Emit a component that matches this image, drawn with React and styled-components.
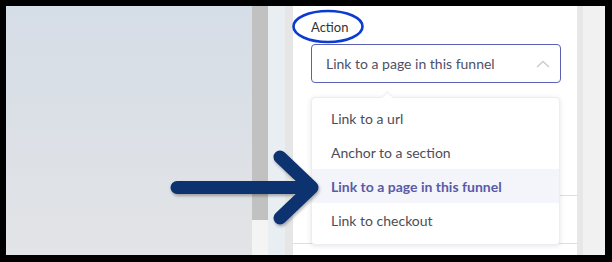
import React from 'react';
import styled, { createGlobalStyle } from 'styled-components';

const GlobalStyle = createGlobalStyle`
  html, body {
    margin: 0;
    padding: 0;
    background: #000;
  }
  body {
    font-family: Lato, "Open Sans", Arial, sans-serif;
  }
`;

const Frame = styled.div`
  position: relative;
  width: 612px;
  height: 262px;
  box-sizing: border-box;
  padding: 6px 7px 7px 6px;
  background: #000;
  display: flex;
  overflow: hidden;
`;

const Canvas = styled.div`
  width: 246px;
  background: linear-gradient(180deg, #d5dde6 0%, #dde1e6 60%, #e3e4e6 100%);
`;

const Scrollbar = styled.div`
  width: 16px;
  background: #f4f4f4;
  display: flex;
  flex-direction: column;
`;

const Thumb = styled.div`
  height: 214px;
  background: #c1c1c1;
`;

const Gutter = styled.div`
  width: ${(p) => p.$w}px;
  background: ${(p) => p.$bg};
`;

const Panel = styled.div`
  position: relative;
  width: 284px;
  background: #fff;
  display: flex;
  flex-direction: column;
  padding-left: 18px;
  box-sizing: border-box;
`;

const Label = styled.span`
  margin-top: 13px;
  font-size: 13px;
  color: #333;
  line-height: 16px;
`;

const Select = styled.div`
  margin-top: 9px;
  width: 250px;
  height: 39px;
  box-sizing: border-box;
  border: 1px solid #5b60b3;
  border-radius: 4px;
  display: flex;
  align-items: center;
  justify-content: space-between;
  padding: 0 10px 0 14px;
  font-size: 14px;
  color: #4e5068;
`;

const Rule = styled.div`
  margin-left: -18px;
  border-top: 1px solid #dedede;
  margin-top: ${(p) => p.$top}px;
`;

const Menu = styled.div`
  position: absolute;
  left: 18px;
  top: 91px;
  width: 249px;
  box-sizing: border-box;
  padding: 3px 0 7px;
  background: #fff;
  border: 1px solid #ececf2;
  border-radius: 4px;
  box-shadow: 0 1px 5px rgba(40, 40, 80, 0.12);

  &::before {
    content: '';
    position: absolute;
    top: -5px;
    left: 71px;
    width: 8px;
    height: 8px;
    background: #fff;
    border-left: 1px solid #ececf2;
    border-top: 1px solid #ececf2;
    transform: rotate(45deg);
  }
`;

const Item = styled.div`
  height: 34px;
  display: flex;
  align-items: center;
  padding-left: 19px;
  font-size: 14px;
  font-weight: ${(p) => (p.$active ? 700 : 400)};
  color: ${(p) => (p.$active ? '#5a5aa6' : '#4d4d58')};
  background: ${(p) => (p.$active ? '#f4f5fa' : 'transparent')};
`;

const Overlay = styled.svg`
  position: absolute;
  left: 0;
  top: 0;
  pointer-events: none;
`;

const options = [
  'Link to a url',
  'Anchor to a section',
  'Link to a page in this funnel',
  'Link to checkout'
];

const App = () => {
  return (
    <>
      <GlobalStyle />
      <Frame>
        <Canvas />
        <Scrollbar>
          <Thumb />
        </Scrollbar>
        <Gutter $w={17} $bg="#e9eef3" />
        <Gutter $w={8} $bg="#e6e6e6" />
        <Panel>
          <Label>Action</Label>
          <Select>
            <span>Link to a page in this funnel</span>
            <svg width="14" height="8" viewBox="0 0 14 8">
              <path d="M1 7 L7 1.5 L13 7" fill="none" stroke="#c9cad6" strokeWidth="1.4" />
            </svg>
          </Select>
          <Rule $top={112} />
          <Rule $top={47} />
          <Menu>
            {options.map((o) => (
              <Item key={o} $active={o === 'Link to a page in this funnel'}>
                {o}
              </Item>
            ))}
          </Menu>
        </Panel>
        <Gutter $w={6} $bg="#e7e7e7" />
        <Gutter $w={22} $bg="#f1f1f1" />
        <Overlay width="612" height="262" viewBox="0 0 612 262">
          <defs>
            <filter id="sh" x="-10%" y="-10%" width="130%" height="130%">
              <feDropShadow dx="1" dy="2" stdDeviation="1.5" floodColor="#000" floodOpacity="0.3" />
            </filter>
          </defs>
          <ellipse cx="328" cy="26.5" rx="34.5" ry="15.5" fill="none" stroke="#0b3bd0" strokeWidth="2.6" />
          <g filter="url(#sh)" stroke="#10306f" strokeWidth="13" strokeLinecap="round" strokeLinejoin="round" fill="none">
            <path d="M177 187.5 L311 187.5" />
            <path d="M280 157 L312 187.5 L280 218" />
          </g>
        </Overlay>
      </Frame>
    </>
  );
};

export default App;
